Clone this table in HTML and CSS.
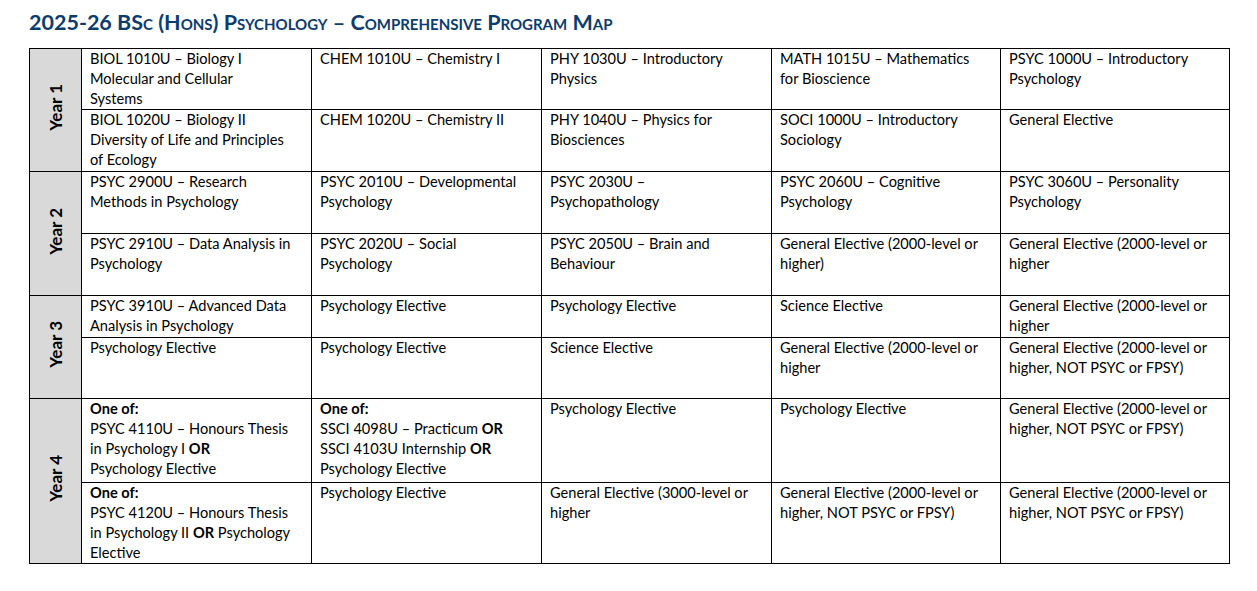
FILE: index.html
```html
<!DOCTYPE html>
<html lang="en">
<head>
<meta charset="utf-8">
<title>2025-26 BSc (Hons) Psychology – Comprehensive Program Map</title>
<link rel="stylesheet" href="styles.css">
</head>
<body>
<div class="page">
  <h1 class="title">2025-26 BSc (Hons) Psychology – Comprehensive Program Map</h1>
  <table class="map">
    <colgroup>
      <col class="c-year">
      <col class="c-course">
      <col class="c-course">
      <col class="c-course">
      <col class="c-course2">
      <col class="c-course2">
    </colgroup>
    <tbody>
      <tr class="h61">
        <th class="year" rowspan="2"><span>Year 1</span></th>
        <td>BIOL 1010U – Biology I<br>Molecular and Cellular<br>Systems</td>
        <td>CHEM 1010U – Chemistry I</td>
        <td>PHY 1030U – Introductory<br>Physics</td>
        <td>MATH 1015U – Mathematics<br>for Bioscience</td>
        <td>PSYC 1000U – Introductory<br>Psychology</td>
      </tr>
      <tr class="h62">
        <td>BIOL 1020U – Biology II<br>Diversity of Life and Principles<br>of Ecology</td>
        <td>CHEM 1020U – Chemistry II</td>
        <td>PHY 1040U – Physics for<br>Biosciences</td>
        <td>SOCI 1000U – Introductory<br>Sociology</td>
        <td>General Elective</td>
      </tr>
      <tr class="h62">
        <th class="year" rowspan="2"><span>Year 2</span></th>
        <td>PSYC 2900U – Research<br>Methods in Psychology</td>
        <td>PSYC 2010U – Developmental<br>Psychology</td>
        <td>PSYC 2030U –<br>Psychopathology</td>
        <td>PSYC 2060U – Cognitive<br>Psychology</td>
        <td>PSYC 3060U – Personality<br>Psychology</td>
      </tr>
      <tr class="h62">
        <td>PSYC 2910U – Data Analysis in<br>Psychology</td>
        <td>PSYC 2020U – Social<br>Psychology</td>
        <td>PSYC 2050U – Brain and<br>Behaviour</td>
        <td>General Elective (2000-level or<br>higher)</td>
        <td>General Elective (2000-level or<br>higher</td>
      </tr>
      <tr class="h42">
        <th class="year" rowspan="2"><span>Year 3</span></th>
        <td>PSYC 3910U – Advanced Data<br>Analysis in Psychology</td>
        <td>Psychology Elective</td>
        <td>Psychology Elective</td>
        <td>Science Elective</td>
        <td>General Elective (2000-level or<br>higher</td>
      </tr>
      <tr class="h61">
        <td>Psychology Elective</td>
        <td>Psychology Elective</td>
        <td>Science Elective</td>
        <td>General Elective (2000-level or<br>higher</td>
        <td>General Elective (2000-level or<br>higher, NOT PSYC or FPSY)</td>
      </tr>
      <tr class="h84">
        <th class="year" rowspan="2"><span>Year 4</span></th>
        <td><b>One of:</b><br>PSYC 4110U – Honours Thesis<br>in Psychology I <b>OR</b><br>Psychology Elective</td>
        <td><b>One of:</b><br>SSCI 4098U – Practicum <b>OR</b><br>SSCI 4103U Internship <b>OR</b><br>Psychology Elective</td>
        <td>Psychology Elective</td>
        <td>Psychology Elective</td>
        <td>General Elective (2000-level or<br>higher, NOT PSYC or FPSY)</td>
      </tr>
      <tr class="h81">
        <td><b>One of:</b><br>PSYC 4120U – Honours Thesis<br>in Psychology II <b>OR</b> Psychology<br>Elective</td>
        <td>Psychology Elective</td>
        <td>General Elective (3000-level or<br>higher</td>
        <td>General Elective (2000-level or<br>higher, NOT PSYC or FPSY)</td>
        <td>General Elective (2000-level or<br>higher, NOT PSYC or FPSY)</td>
      </tr>
    </tbody>
  </table>
</div>
</body>
</html>
```
FILE: styles.css
```css
html, body {
  margin: 0;
  padding: 0;
  background: #ffffff;
}

.page {
  padding: 9px 0 0 29px;
  font-family: Lato, "Open Sans", "Liberation Sans", sans-serif;
  color: #000000;
}

.title {
  margin: 0 0 13px 0;
  font-size: 21.5px;
  line-height: 26px;
  font-weight: 700;
  font-variant: small-caps;
  color: #0b3c70;
  letter-spacing: 0;
}

.map {
  border-collapse: collapse;
  table-layout: fixed;
  width: 1201px;
  font-size: 14.6px;
  line-height: 20px;
}

.c-year { width: 52px; }
.c-course { width: 230px; }
.c-course2 { width: 229px; }

.map td,
.map th {
  border: 1px solid #000000;
  padding: 0 4px 0 8px;
  vertical-align: top;
  text-align: left;
  font-weight: 400;
  white-space: nowrap;
  overflow: hidden;
}

.map td b {
  font-weight: 700;
}

.map th.year {
  background: #d9d9d9;
  vertical-align: middle;
  text-align: center;
  padding: 0;
}

.year span {
  display: inline-block;
  writing-mode: vertical-rl;
  transform: rotate(180deg);
  font-weight: 700;
  font-size: 17px;
  line-height: 20px;
}

.h42 { height: 42px; }
.h61 { height: 61px; }
.h62 { height: 62px; }
.h81 { height: 81px; }
.h84 { height: 84px; }
```
